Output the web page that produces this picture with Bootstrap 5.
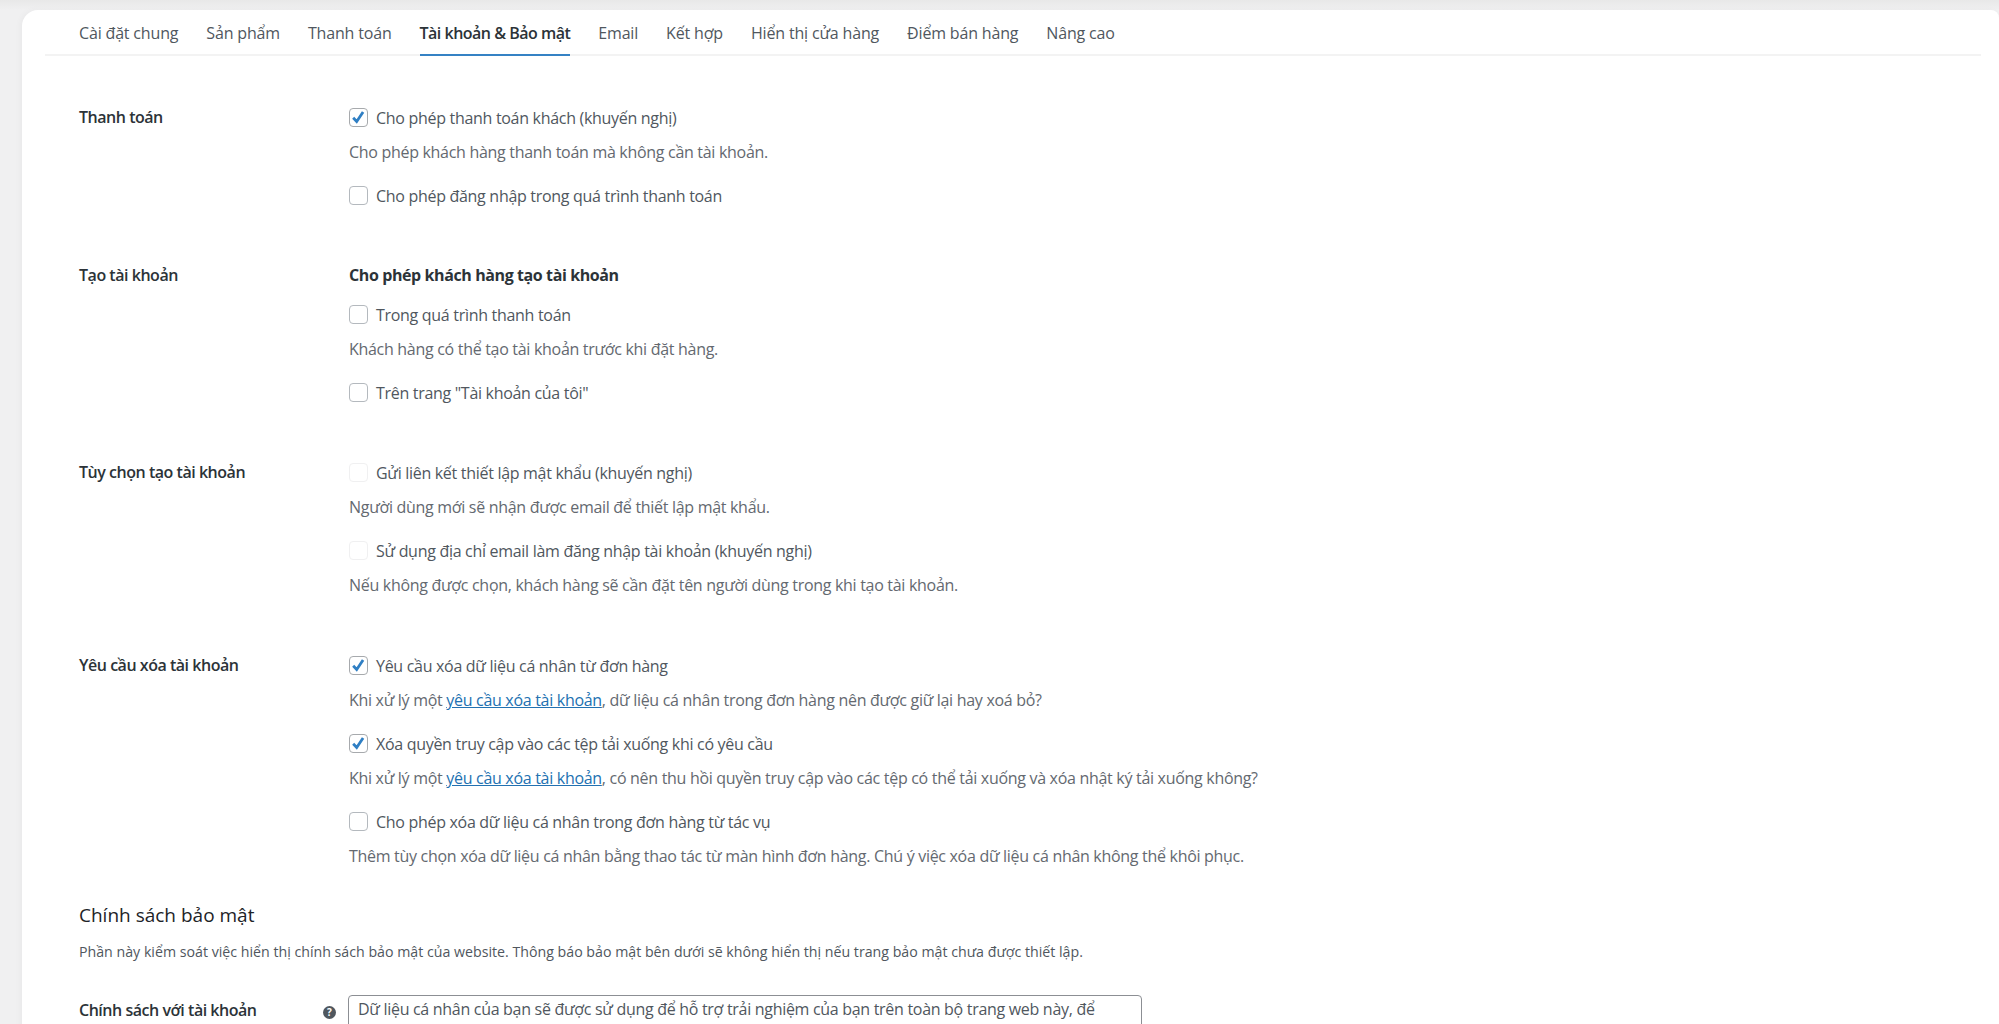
<!DOCTYPE html>
<html lang="vi">
<head>
<meta charset="utf-8">
<title>Tài khoản &amp; Bảo mật</title>
<link rel="stylesheet" href="https://cdn.jsdelivr.net/npm/bootstrap@5.3.0/dist/css/bootstrap.min.css">
<style>
html,body{height:1024px;overflow:hidden}
body{background:#f0f0f1;background-image:linear-gradient(#e8e8e8,#f0f0f1 10px);font-family:"Open Sans","Noto Sans",sans-serif;font-size:16px;color:#50575e;letter-spacing:-.3px}
.sheet{margin:10px 0 0 22px;background:#fff;border-radius:16px 8px 0 0;height:1100px;box-shadow:-2px 0 6px rgba(0,0,0,.03)}
.tabbar{margin:0 18px 0 23px;padding-left:34px;height:46px;border-bottom:2px solid #f3f3f3;gap:28px;flex-wrap:nowrap}
.tabbar .nav-link{padding:0;height:46px;line-height:46px;color:#50575e;font-size:16px;letter-spacing:-.17px}
.tabbar .nav-link.active{color:#2c3338;font-weight:600;border-bottom:2px solid #3582c4;letter-spacing:-.5px}
.setting-area{padding:48px 0 0 57px}
.setting-group{display:flex;margin-bottom:53px}
.setting-group.tight{margin-bottom:32px}
.setting-name{width:270px;flex:none;font-weight:600;color:#2c3338;line-height:27px;letter-spacing:-.47px}
.opt-line{display:flex;align-items:center;height:27px;margin-bottom:16px;color:#50575e}
.opt-line:has(+.hint-line){margin-bottom:8px}
.opt-line:last-child,.hint-line:last-child{margin-bottom:0}
.opt-line .form-check-input{width:18.5px;height:18.5px;margin:0 8.5px 0 0;flex:none;border:1.5px solid #b4b9be;border-radius:4px;background-color:#fff}
.opt-line .form-check-input:checked{background-color:#fff;border-color:#a7aaad;background-size:100%;background-image:url("data:image/svg+xml,%3Csvg xmlns='http://www.w3.org/2000/svg' viewBox='0 0 16 16'%3E%3Cpath fill='none' stroke='%232f7fc4' stroke-width='2.6' d='M3 8.2l3.3 3.6 6-9'/%3E%3C/svg%3E")}
.opt-line .form-check-input:disabled{opacity:1;border-color:#f0f0f1}
.opt-line .form-check-input:disabled~.form-check-label{opacity:1}
.hint-line{line-height:27px;margin-bottom:16px;color:#646970}
.hint-line a{color:#2271b1}
.group-title{font-weight:700;color:#2c3338;line-height:27px;margin-bottom:12px;letter-spacing:-.4px}
.section-title{font-size:19px;color:#1d2327;font-weight:400;line-height:27px;margin-bottom:9px;letter-spacing:0}
.section-note{font-size:14.2px;color:#50575e;line-height:27px;margin-bottom:30px;letter-spacing:0}
.policy-row{display:flex;align-items:flex-start}
.policy-name{width:265px;flex:none;display:flex;justify-content:space-between;align-items:center;padding:2px 8px 0 0;font-weight:600;color:#2c3338;line-height:27px;letter-spacing:-.47px}
.help-dot{width:13px;height:13px;margin-top:3px;border-radius:50%;background:#50575e;color:#fff;font-size:10px;font-weight:700;line-height:13px;text-align:center;letter-spacing:0}
.policy-text.form-control{width:794px;height:120px;padding:0 9px;font-size:16px;line-height:27px;color:#50575e;border:1px solid #8c8f94;border-radius:4px;letter-spacing:-.3px;margin-left:4px;resize:none;overflow:hidden;font-family:inherit;min-height:0}
</style>
</head>
<body>
<div class="sheet">
  <ul class="nav tabbar">
    <li class="nav-item"><a class="nav-link" href="#">Cài đặt chung</a></li>
    <li class="nav-item"><a class="nav-link" href="#">Sản phẩm</a></li>
    <li class="nav-item"><a class="nav-link" href="#">Thanh toán</a></li>
    <li class="nav-item"><a class="nav-link active" href="#">Tài khoản &amp; Bảo mật</a></li>
    <li class="nav-item"><a class="nav-link" href="#">Email</a></li>
    <li class="nav-item"><a class="nav-link" href="#">Kết hợp</a></li>
    <li class="nav-item"><a class="nav-link" href="#">Hiển thị cửa hàng</a></li>
    <li class="nav-item"><a class="nav-link" href="#">Điểm bán hàng</a></li>
    <li class="nav-item"><a class="nav-link" href="#">Nâng cao</a></li>
  </ul>
  <div class="setting-area">
    <div class="setting-group">
      <div class="setting-name">Thanh toán</div>
      <div>
        <div class="opt-line"><input class="form-check-input" type="checkbox" id="c1" checked><label class="form-check-label" for="c1">Cho phép thanh toán khách (khuyến nghị)</label></div>
        <div class="hint-line">Cho phép khách hàng thanh toán mà không cần tài khoản.</div>
        <div class="opt-line"><input class="form-check-input" type="checkbox" id="c2"><label class="form-check-label" for="c2">Cho phép đăng nhập trong quá trình thanh toán</label></div>
      </div>
    </div>
    <div class="setting-group">
      <div class="setting-name">Tạo tài khoản</div>
      <div>
        <div class="group-title">Cho phép khách hàng tạo tài khoản</div>
        <div class="opt-line"><input class="form-check-input" type="checkbox" id="c3"><label class="form-check-label" for="c3">Trong quá trình thanh toán</label></div>
        <div class="hint-line">Khách hàng có thể tạo tài khoản trước khi đặt hàng.</div>
        <div class="opt-line"><input class="form-check-input" type="checkbox" id="c4"><label class="form-check-label" for="c4">Trên trang "Tài khoản của tôi"</label></div>
      </div>
    </div>
    <div class="setting-group">
      <div class="setting-name">Tùy chọn tạo tài khoản</div>
      <div>
        <div class="opt-line"><input class="form-check-input" type="checkbox" id="c5" disabled><label class="form-check-label" for="c5">Gửi liên kết thiết lập mật khẩu (khuyến nghị)</label></div>
        <div class="hint-line">Người dùng mới sẽ nhận được email để thiết lập mật khẩu.</div>
        <div class="opt-line"><input class="form-check-input" type="checkbox" id="c6" disabled><label class="form-check-label" for="c6">Sử dụng địa chỉ email làm đăng nhập tài khoản (khuyến nghị)</label></div>
        <div class="hint-line">Nếu không được chọn, khách hàng sẽ cần đặt tên người dùng trong khi tạo tài khoản.</div>
      </div>
    </div>
    <div class="setting-group tight">
      <div class="setting-name">Yêu cầu xóa tài khoản</div>
      <div>
        <div class="opt-line"><input class="form-check-input" type="checkbox" id="c7" checked><label class="form-check-label" for="c7">Yêu cầu xóa dữ liệu cá nhân từ đơn hàng</label></div>
        <div class="hint-line">Khi xử lý một <a href="#">yêu cầu xóa tài khoản</a>, dữ liệu cá nhân trong đơn hàng nên được giữ lại hay xoá bỏ?</div>
        <div class="opt-line"><input class="form-check-input" type="checkbox" id="c8" checked><label class="form-check-label" for="c8">Xóa quyền truy cập vào các tệp tải xuống khi có yêu cầu</label></div>
        <div class="hint-line">Khi xử lý một <a href="#">yêu cầu xóa tài khoản</a>, có nên thu hồi quyền truy cập vào các tệp có thể tải xuống và xóa nhật ký tải xuống không?</div>
        <div class="opt-line"><input class="form-check-input" type="checkbox" id="c9"><label class="form-check-label" for="c9">Cho phép xóa dữ liệu cá nhân trong đơn hàng từ tác vụ</label></div>
        <div class="hint-line">Thêm tùy chọn xóa dữ liệu cá nhân bằng thao tác từ màn hình đơn hàng. Chú ý việc xóa dữ liệu cá nhân không thể khôi phục.</div>
      </div>
    </div>
    <h2 class="section-title">Chính sách bảo mật</h2>
    <p class="section-note">Phần này kiểm soát việc hiển thị chính sách bảo mật của website. Thông báo bảo mật bên dưới sẽ không hiển thị nếu trang bảo mật chưa được thiết lập.</p>
    <div class="policy-row">
      <div class="policy-name"><span>Chính sách với tài khoản</span><span class="help-dot">?</span></div>
      <textarea class="form-control policy-text" rows="4">Dữ liệu cá nhân của bạn sẽ được sử dụng để hỗ trợ trải nghiệm của bạn trên toàn bộ trang web này, để
quản lý quyền truy cập vào tài khoản của bạn.</textarea>
    </div>
  </div>
</div>
<script src="https://cdn.jsdelivr.net/npm/bootstrap@5.3.0/dist/js/bootstrap.bundle.min.js"></script>
</body>
</html>
